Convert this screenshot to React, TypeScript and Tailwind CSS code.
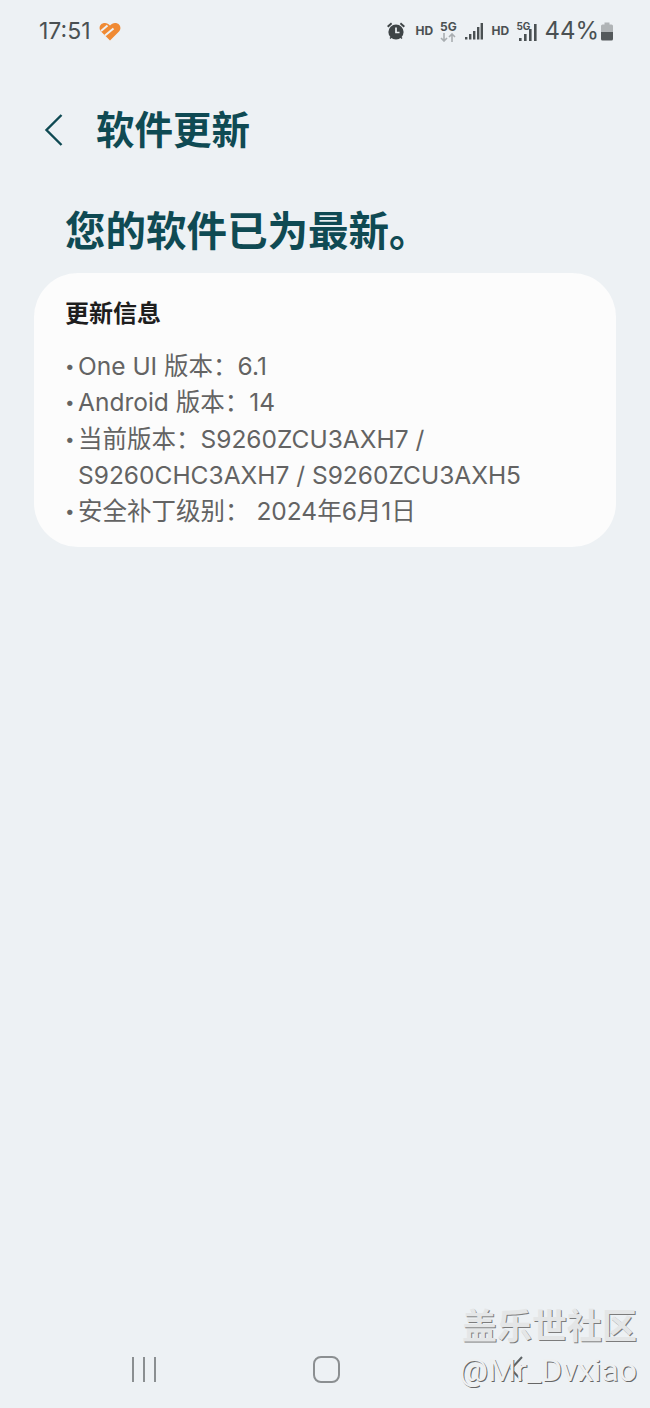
import React from 'react';

const base = "font-['Inter','Noto_Sans_CJK_SC',sans-serif]";

const StatusBar: React.FC = () => (
  <div className="flex h-[62px] items-center justify-between pl-[39px] pr-[36px]">
    <div className="flex items-center gap-[8px]">
      <span className="font-['Inter',sans-serif] text-[23px] leading-none text-[#4a5052]">17:51</span>
      <svg width="22" height="19" viewBox="0 0 22 19" fill="#f08a33">
        <path d="M11 18.5 L2 9.5 C-1 6 1 1 6 1 C8 1 9.5 2 11 3.5 C12.5 2 14 1 16 1 C21 1 23 6 20 9.5 Z" />
        <path d="M2 9 L8.5 3.5 M6 13.5 L14.5 6.5" fill="none" stroke="#edf1f4" strokeWidth="2" />
      </svg>
    </div>
    <div className="flex items-center text-[#4a5052]">
      <svg width="20" height="20" viewBox="0 0 20 20" className="mr-[9px]" fill="#3f4547">
        <circle cx="10" cy="11" r="7.6" />
        <path d="M1 5 L5 1.5 L6.2 3 L2.4 6.4 Z M19 5 L15 1.5 L13.8 3 L17.6 6.4 Z M3.5 17 L5.5 15 L6.5 16 L4.6 18 Z M16.5 17 L14.5 15 L13.5 16 L15.4 18 Z" />
        <path d="M10 6.5 V11.5 H13.5" fill="none" stroke="#edf1f4" strokeWidth="1.7" />
      </svg>
      <span className="mr-[8px] w-[17px] font-['Inter',sans-serif] text-[12px] font-bold leading-none">HD</span>
      <div className="mr-[9px] flex w-[16px] flex-col items-center">
        <span className="font-['Inter',sans-serif] text-[12px] font-bold leading-[12px]">5G</span>
        <svg width="16" height="9" viewBox="0 0 16 9" fill="none" stroke="#a9aeb1" strokeWidth="1.6">
          <path d="M4 0 V8 M1 5 L4 8 L7 5 M12 9 V1 M9 4 L12 1 L15 4" />
        </svg>
      </div>
      <svg width="18" height="18" viewBox="0 0 18 18" className="mr-[8px]" fill="#4a5052">
        <rect x="0" y="15" width="2.4" height="2.5" />
        <rect x="4" y="12" width="2.4" height="5.5" />
        <rect x="8" y="9" width="2.4" height="8.5" />
        <rect x="12" y="5" width="2.4" height="12.5" />
        <rect x="15.6" y="1" width="2.4" height="16.5" />
      </svg>
      <span className="mr-[8px] w-[17px] font-['Inter',sans-serif] text-[12px] font-bold leading-none">HD</span>
      <div className="relative mr-[7px] h-[20px] w-[21px]">
        <span className="absolute left-0 top-[-1px] font-['Inter',sans-serif] text-[10px] font-bold leading-[12px]">5G</span>
        <svg width="18" height="18" viewBox="0 0 18 18" className="absolute bottom-0 right-0" fill="#4a5052">
          <rect x="0" y="15" width="2.6" height="3" />
          <rect x="5" y="11" width="2.6" height="7" />
          <rect x="10" y="6" width="2.6" height="12" />
          <rect x="15" y="1" width="2.6" height="17" />
        </svg>
      </div>
      <span className="font-['Inter',sans-serif] text-[24px] leading-none">44%</span>
      <svg width="14" height="19" viewBox="0 0 14 19" className="ml-[1px]">
        <path d="M4.5 0.5 H9.5 V2.5 H11.5 Q13 2.5 13 4 V10 H1 V4 Q1 2.5 2.5 2.5 H4.5 Z" fill="#b0b4b6" />
        <path d="M1 10 H13 V17 Q13 18.5 11.5 18.5 H2.5 Q1 18.5 1 17 Z" fill="#54595b" />
      </svg>
    </div>
  </div>
);

const infoLines = [
  ['One UI 版本：6.1'],
  ['Android 版本：14'],
  ['当前版本：S9260ZCU3AXH7 /', 'S9260CHC3AXH7 / S9260ZCU3AXH5'],
  ['安全补丁级别： 2024年6月1日'],
];

const App: React.FC = () => {
  return (
    <div className={`relative flex h-[1408px] w-[650px] flex-col overflow-hidden bg-[#edf1f4] ${base}`}>
      <StatusBar />

      <div className="mt-[40px] flex h-[56px] items-center pl-[44px]">
        <svg width="20" height="34" viewBox="0 0 20 34" fill="none" stroke="#0f4a53" strokeWidth="2.4">
          <path d="M17.5 2 L2.5 17 L17.5 32" />
        </svg>
        <h1 className="ml-[32px] text-[38.5px] font-bold leading-none text-[#0f4a53]">软件更新</h1>
      </div>

      <h2 className="mt-[46px] pl-[65px] text-[40.5px] font-bold leading-[56px] text-[#0f4a53]">您的软件已为最新。</h2>

      <section className="mx-[34px] mt-[13px] h-[274px] rounded-[44px] bg-[#fcfcfc] pl-[31px] pt-[26px]">
        <h3 className="text-[24px] font-bold leading-[30px] text-[#1e1e1e]">更新信息</h3>
        <ul className="mt-[19px] text-[24.5px] leading-[36.25px] text-[#636363]">
          {infoLines.map((lines) => (
            <li key={lines[0]} className="flex">
              <span className="w-[13px] shrink-0 text-[17px]">•</span>
              <span>
                {lines.map((line) => (
                  <span key={line} className="block whitespace-nowrap">{line}</span>
                ))}
              </span>
            </li>
          ))}
        </ul>
      </section>

      <nav className="absolute bottom-[25px] left-0 flex h-[28px] w-full items-center">
        <div className="ml-[132px] flex gap-[9px]">
          <span className="h-[25px] w-[2px] bg-[#8b8f91]" />
          <span className="h-[25px] w-[2px] bg-[#8b8f91]" />
          <span className="h-[25px] w-[2px] bg-[#8b8f91]" />
        </div>
        <span className="ml-[157px] h-[27px] w-[27px] rounded-[8px] border-2 border-[#8b8f91]" />
        <svg width="16" height="26" viewBox="0 0 16 26" fill="none" stroke="#5f6466" strokeWidth="2" className="ml-[168px]">
          <path d="M14 1 L3 13 L14 25" />
        </svg>
      </nav>

      <div className="absolute right-[13px] top-[1303px] flex flex-col items-end font-['Noto_Sans_CJK_SC',sans-serif]">
        <span className="text-[35px] font-bold leading-[42px] text-[#e4e6e7] [text-shadow:1px_1px_0_#7c7c7c]">盖乐世社区</span>
        <span className="mt-[6px] font-['Roboto',sans-serif] text-[32px] leading-[38px] text-[#eef0f1] [text-shadow:1px_1px_0_#666666]">@Mr_Dvxiao</span>
      </div>
    </div>
  );
};

export default App;
